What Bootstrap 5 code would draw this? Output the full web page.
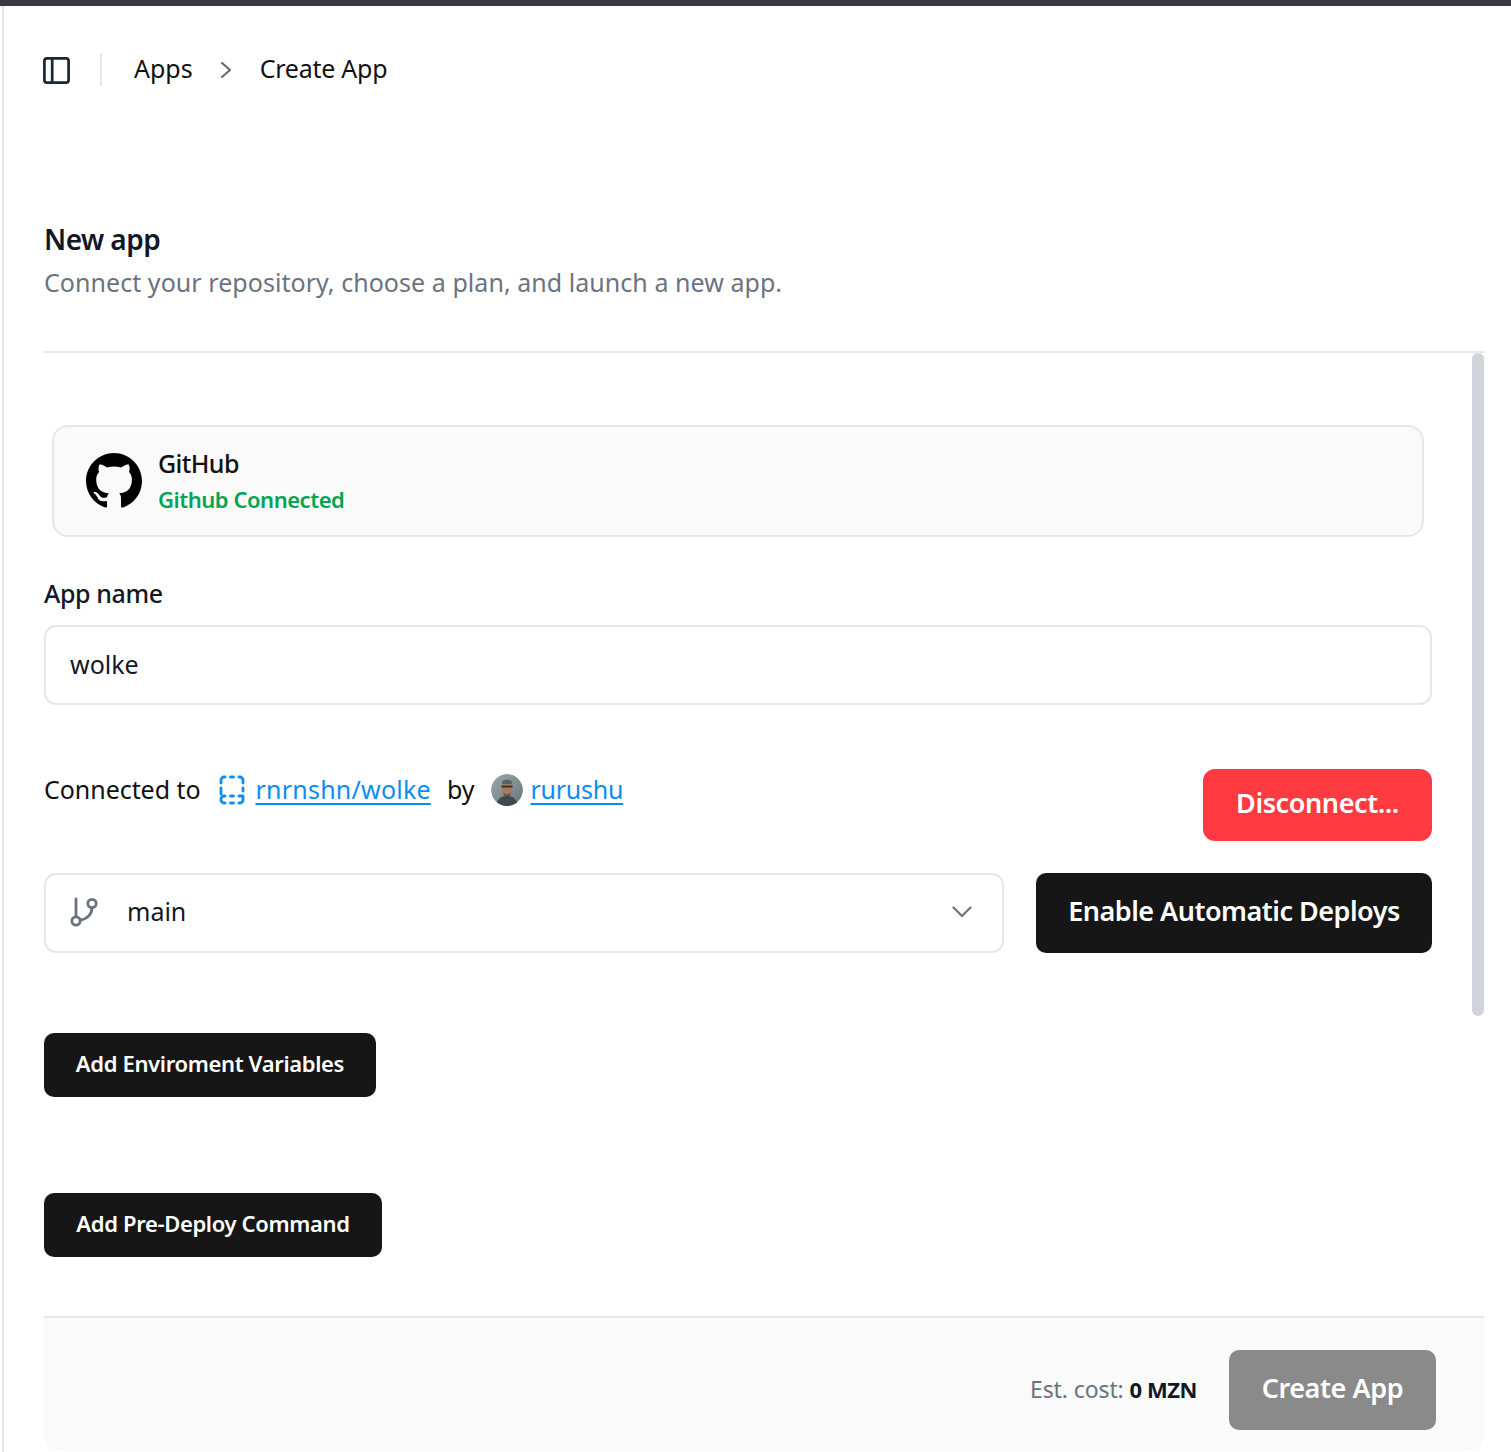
<!DOCTYPE html>
<html lang="en">
<head>
  <meta charset="UTF-8" />
  <meta name="viewport" content="width=device-width, initial-scale=1.0" />
  <title>Create App</title>
  <link href="https://cdn.jsdelivr.net/npm/bootstrap@5.3.0/dist/css/bootstrap.min.css" rel="stylesheet" />
  <style>
    html, body { height: 100%; }
    body {
      font-family: "Noto Sans", "Open Sans", sans-serif;
      color: #111827;
      background: #fff;
      overflow: hidden;
    }
    .top-strip { height: 6px; background: #3a3a40; }
    .app-shell { margin-left: 2px; border-left: 2px solid #e5e5e5; height: 1446px; padding: 0 27px 0 40px; }

    /* breadcrumb header */
    .page-head { height: 128px; }
    .panel-btn { width: 27px; height: 27px; display: block; margin-left: -1px; }
    .head-sep { width: 2px; height: 32px; background: #e5e7eb; margin: 0 32px 0 30px; }
    .page-head .crumb { font-size: 25px; color: #111; line-height: 1; padding-bottom: 4px; }
    .page-head .crumb-last { letter-spacing: -.25px; margin-left: 1px; }
    .crumb-arrow { margin: 0 27px 0 27px; display: block; }

    /* title block */
    .title-block { margin-top: 88px; height: 132px; border-bottom: 2px solid #e5e7eb; }
    .title-block h1 { font-size: 28px; font-weight: 600; line-height: 36px; margin: -1px 0 0; letter-spacing: -.55px; }
    .title-block p { font-size: 25px; line-height: 36px; margin: 7px 0 0; color: #6b7280; letter-spacing: .05px; }

    .scroll-area { position: relative; height: 963px; padding: 72px 52px 0 0; }
    .scroll-thumb { position: absolute; right: 0; top: 0; width: 12px; height: 663px; background: #d1d5db; border-radius: 6px; }

    .provider-card {
      margin: 0 8px;
      height: 112px;
      padding: 0 32px;
      background: #fafafa;
      border: 2px solid #e5e7eb;
      border-radius: 16px;
    }
    .provider-name { font-size: 25px; font-weight: 500; line-height: 34px; color: #111; letter-spacing: -.6px; }
    .provider-status { font-size: 22px; font-weight: 600; line-height: 34px; color: #00a651; letter-spacing: -.47px; margin-top: 2px; }

    .field-label { font-size: 25px; font-weight: 500; line-height: 32px; margin: 40px 0 16px; color: #111827; letter-spacing: -.4px; }
    .form-control.big-input {
      height: 80px;
      border: 2px solid #e5e7eb;
      border-radius: 12px;
      padding: 0 24px 2px;
      font-size: 25px;
      color: #111827;
      box-shadow: none;
    }

    .connect-row { margin-top: 64px; height: 72px; font-size: 25px; color: #111; }
    .connect-text { height: 41px; }
    .connect-text .connected-label { letter-spacing: -.05px; }
    .connect-text a { color: #0a8df0; text-decoration: underline; text-underline-offset: 4px; text-decoration-thickness: 2px; }
    .connect-text a.repo-link { letter-spacing: .23px; margin-left: -1px; }
    .connect-text a.user-link { letter-spacing: -.25px; }
    .repo-icon { margin: 0 11px 0 19px; display: block; }
    .by-word { margin: 0 16px; }
    .avatar { width: 32px; height: 32px; border-radius: 50%; display: block; margin-right: 8px; }

    .btn.btn-danger-soft, .btn.btn-ink, .btn.btn-muted {
      border: 0; color: #fff; font-weight: 600; display: inline-flex; align-items: center; justify-content: center; padding: 0 0 4px;
    }
    .btn.btn-danger-soft { background: #ff3b41; width: 229px; height: 72px; border-radius: 12px; font-size: 27px; letter-spacing: -.4px; }
    .btn.btn-ink { background: #161616; border-radius: 10px; }
    .btn.btn-muted { background: #8a8a8a; width: 207px; height: 80px; border-radius: 10px; font-size: 27px; letter-spacing: -.4px; opacity: 1; }

    .branch-row { margin-top: 32px; gap: 32px; }
    .form-control.branch-select { height: 80px; padding: 0 30px 2px 24px; flex: 1; font-size: 25px; }
    .branch-select .branch-name { margin-left: 29px; }
    .btn.btn-auto { width: 396px; height: 80px; font-size: 27px; letter-spacing: -.5px; }
    .btn.btn-add { height: 64px; font-size: 22px; letter-spacing: -.35px; }
    .btn-env { width: 332px; margin-top: 80px; }
    .btn-pre { width: 338px; margin-top: 96px; }

    .foot-bar {
      height: 135px;
      background: #fafafa;
      border-top: 2px solid #e5e7eb;
      border-radius: 0 0 16px 16px;
      padding: 11px 48px 0 0;
    }
    .est-cost { font-size: 23px; color: #6b7280; margin-right: 32px; padding-bottom: 2px; letter-spacing: -.1px; }
    .est-cost strong { color: #111827; font-weight: 700; font-size: 22px; letter-spacing: -.45px; }
  </style>
</head>
<body>
  <div class="top-strip"></div>
  <div class="app-shell">
    <!-- breadcrumb -->
    <div class="page-head d-flex align-items-center">
      <svg class="panel-btn" viewBox="0 0 27 27" fill="none" stroke="#1a2736" stroke-width="2.7">
        <rect x="1.4" y="1.4" width="24.2" height="24.2" rx="2.6"/>
        <line x1="9.2" y1="1.4" x2="9.2" y2="25.6"/>
      </svg>
      <div class="head-sep"></div>
      <span class="crumb">Apps</span>
      <svg class="crumb-arrow" width="12" height="18" viewBox="0 0 12 18" fill="none" stroke="#6b6b6b" stroke-width="2.2" stroke-linecap="round" stroke-linejoin="round"><path d="M2 2l8 7-8 7"/></svg>
      <span class="crumb crumb-last">Create App</span>
    </div>

    <div class="title-block">
      <h1>New app</h1>
      <p>Connect your repository, choose a plan, and launch a new app.</p>
    </div>

    <div class="scroll-area">
      <div class="scroll-thumb"></div>

      <div class="provider-card d-flex align-items-center gap-3">
        <svg width="56" height="56" viewBox="0 0 16 16" fill="#000"><path d="M8 0C3.58 0 0 3.58 0 8c0 3.54 2.29 6.53 5.47 7.59.4.07.55-.17.55-.38 0-.19-.01-.82-.01-1.49-2.01.37-2.53-.49-2.69-.94-.09-.23-.48-.94-.82-1.13-.28-.15-.68-.52-.01-.53.63-.01 1.08.58 1.23.82.72 1.21 1.87.87 2.33.66.07-.52.28-.87.51-1.07-1.78-.2-3.64-.89-3.64-3.95 0-.87.31-1.59.82-2.15-.08-.2-.36-1.02.08-2.12 0 0 .67-.21 2.2.82.64-.18 1.32-.27 2-.27.68 0 1.36.09 2 .27 1.53-1.04 2.2-.82 2.2-.82.44 1.1.16 1.92.08 2.12.51.56.82 1.27.82 2.15 0 3.07-1.87 3.75-3.65 3.95.29.25.54.73.54 1.48 0 1.07-.01 1.93-.01 2.2 0 .21.15.46.55.38A8.012 8.012 0 0 0 16 8c0-4.42-3.58-8-8-8z"/></svg>
        <div>
          <div class="provider-name">GitHub</div>
          <div class="provider-status">Github Connected</div>
        </div>
      </div>

      <div class="field-label">App name</div>
      <input class="form-control big-input" type="text" value="wolke" />

      <div class="connect-row d-flex justify-content-between align-items-start">
        <div class="connect-text d-flex align-items-center">
          <span class="connected-label">Connected to</span>
          <svg class="repo-icon" width="26" height="30" viewBox="0 0 26 30" fill="none" stroke="#0a8df0" stroke-width="2.8" stroke-linecap="round" stroke-linejoin="round">
            <path d="M2 8V5a3 3 0 0 1 3-3h1M11.500 2h3M20 2h1a3 3 0 0 1 3 3v3M24 13v3M2 13v6M24 21v4a3 3 0 0 1-3 3h-1M14.500 28h-3M6 28H5a3 3 0 0 1-3-3v-1a3 3 0 0 1 3-3h1M11.500 21h3M20 21h4"/>
          </svg>
          <a class="repo-link" href="#">rnrnshn/wolke</a>
          <span class="by-word">by</span>
          <svg class="avatar" viewBox="0 0 32 32">
            <defs><linearGradient id="avBg" x1="0" y1="0" x2="1" y2="1"><stop offset="0" stop-color="#9aa8ac"/><stop offset="1" stop-color="#69777c"/></linearGradient></defs>
            <circle cx="16" cy="16" r="16" fill="url(#avBg)"/>
            <path d="M5 32c1-7 5-10 11-10s10 3 11 10z" fill="#3f4a50"/>
            <ellipse cx="16" cy="14" rx="5.500" ry="7.500" fill="#a87a5e"/>
            <path d="M11 8c1-3 9-3 10 0l-.5 2h-9z" fill="#55606a"/>
            <path d="M10.500 11.500h11v2h-11z" fill="#30353a"/>
            <path d="M12 18c2 3 6 3 8 0l-1 4h-6z" fill="#7a4f3a"/>
          </svg>
          <a class="user-link" href="#">rurushu</a>
        </div>
        <button class="btn btn-danger-soft" type="button">Disconnect...</button>
      </div>

      <div class="branch-row d-flex">
        <div class="form-control big-input branch-select d-flex align-items-center justify-content-between">
          <div class="d-flex align-items-center">
            <svg width="28" height="30" viewBox="0 0 28 30" fill="none" stroke="#6b7280" stroke-width="2.8" stroke-linecap="round">
              <circle cx="6" cy="24" r="4.200"/><circle cx="22" cy="6.500" r="4.200"/>
              <path d="M6 19.500V2M10 23c7-1 11.500-5 12-12"/>
            </svg>
            <span class="branch-name">main</span>
          </div>
          <svg width="20" height="12" viewBox="0 0 20 12" fill="none" stroke="#6b7280" stroke-width="2.2" stroke-linecap="round" stroke-linejoin="round"><path d="M1.500 1.500l8.500 8.500 8.500-8.500"/></svg>
        </div>
        <button class="btn btn-ink btn-auto" type="button">Enable Automatic Deploys</button>
      </div>

      <div><button class="btn btn-ink btn-add btn-env" type="button">Add Enviroment Variables</button></div>
      <div><button class="btn btn-ink btn-add btn-pre" type="button">Add Pre-Deploy Command</button></div>
    </div>

    <div class="foot-bar d-flex align-items-center justify-content-end">
      <div class="est-cost">Est. cost: <strong>0 MZN</strong></div>
      <button class="btn btn-muted" type="button">Create App</button>
    </div>
  </div>
  <script src="https://cdn.jsdelivr.net/npm/bootstrap@5.3.0/dist/js/bootstrap.bundle.min.js"></script>
</body>
</html>
